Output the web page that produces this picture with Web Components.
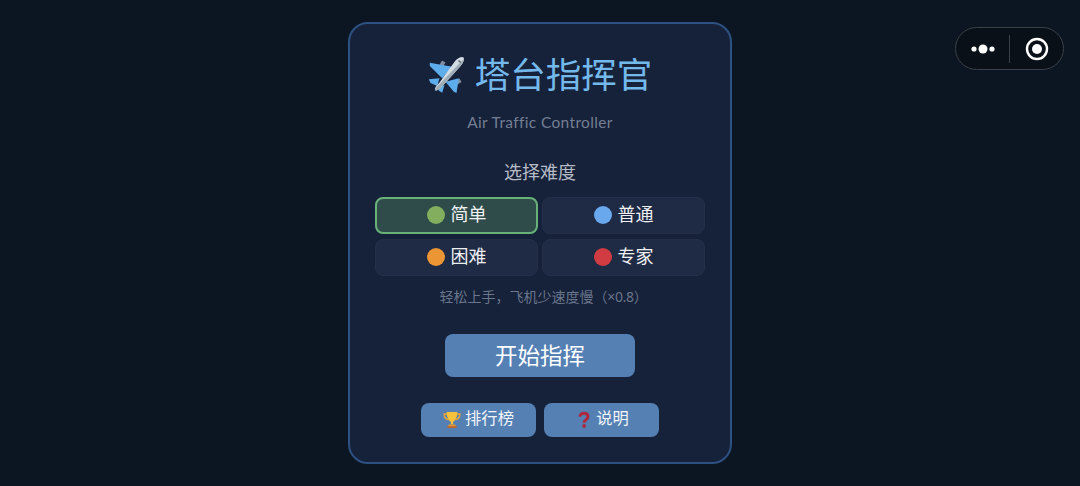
<!DOCTYPE html>
<html lang="zh"><head><meta charset="utf-8"><title>塔台指挥官</title>
<style>
html,body{margin:0;height:486px;overflow:hidden;background:#0c1622}
body{font-family:"Noto Sans","Noto Sans CJK SC",sans-serif}
</style></head><body>
<atc-screen>
  <atc-card>
    <atc-title></atc-title>
    <atc-difficulty></atc-difficulty>
    <atc-start>开始指挥</atc-start>
    <atc-actions></atc-actions>
  </atc-card>
  <atc-capsule></atc-capsule>
</atc-screen>
<script>
const def=(name,html,init)=>customElements.define(name,class extends HTMLElement{
  constructor(){super();this.attachShadow({mode:'open'}).innerHTML=html}
  connectedCallback(){init&&init(this)}
});
const FONT='"Noto Sans","Noto Sans CJK SC",sans-serif';
const PLANE=`<svg width="36" height="37" viewBox="-1.500 -1 36 37" style="overflow:visible" aria-hidden="true">
<path fill="#7f8fa0" d="M12.500 3.500l3.500 2-2.500 4-3.300-2zM30 21.500l2 3.500-4 2.500-2-3.300z"/>
<path fill="#5dadec" d="M.3 5.700 22.700 9.700 12.700 21.300.3 9zM29.300 21.300 27 36 24.300 34.700 16 24.700zM-.7 22.300 10 21.300 7.700 29 1 26zM15 28 12.700 35.700 9.300 33.700 9 31z"/>
<path fill="#d3dce3" d="M34 .6c1.400 1.400-.1 5.600-3.300 8.800L13 29c-2.100 2.100-5.900 5.600-7.300 4.200-1.400-1.400 1.900-5 4-7.100L25.600 3.900C28.800.7 32.600-.8 34 .6z"/>
<path fill="#9fadb8" d="M5.700 33.200c-1.100-1.100 2.400-4.200 4.400-6.200L30.800 5.600c1.400-1.400 2.900-2.800 3.200-4.300.8 1.700-.3 5.100-3.300 8.100L13 29c-2.100 2.100-5.900 5.600-7.300 4.200z"/>
<path fill="#55626d" d="M29.500 3.100l2.200 2-.9.9-2.300-2z"/></svg>`;
const TROPHY=`<svg width="18" height="18" viewBox="0 0 18 18" aria-hidden="true">
<path fill="none" stroke="#f4a52e" stroke-width="1.500" d="M4 3H1.200c0 3.500 1.300 5.300 4 5.500M14 3h2.800c0 3.500-1.300 5.300-4 5.500"/>
<path fill="#f6c23c" d="M3.700 1h10.600c0 5-1.600 8.600-4.200 9.800v2.400H7.900v-2.400C5.300 9.600 3.700 6 3.700 1z"/>
<path fill="#e59a2b" d="M5.800 13.400h6.400l.8 2H5z"/><path fill="#c1662d" d="M4.300 15.200h9.400V17H4.300z"/></svg>`;
const QUESTION=`<svg width="12" height="18" viewBox="1 0 12 18" style="margin-left:4px" aria-hidden="true">
<path fill="none" stroke="#b0283c" stroke-width="3" d="M3 5.800C3 3.500 4.700 2.300 7 2.300s4 1.300 4 3.300c0 3-3.900 3-3.900 6.200"/>
<circle cx="7.100" cy="15" r="1.900" fill="#b0283c"/></svg>`;

def('atc-screen',`<style>:host{display:flex;justify-content:center;position:relative;height:486px;padding-top:22px;box-sizing:border-box}</style><slot></slot>`);
def('atc-card',`<style>:host{display:flex;flex-direction:column;align-items:center;box-sizing:border-box;width:384px;height:442px;padding:25px 25px 0;background:#16213a;border:2px solid #2c5182;border-radius:20px;color:#fff;font-family:${FONT}}</style><slot></slot>`);
def('atc-title',`<style>
:host{display:flex;flex-direction:column;align-items:center}
h1{margin:0;display:flex;align-items:center;gap:11px;height:50px;font-size:35.500px;line-height:50px;font-weight:400;color:#74b9ec;letter-spacing:0}
p{margin:11px 0 0;height:24px;line-height:24px;font-size:15.500px;color:#747f93;font-family:"Lato","Noto Sans",sans-serif;letter-spacing:.35px}
</style><h1><span style="display:flex">${PLANE}</span><span>塔台指挥官</span></h1><p>Air Traffic Controller</p>`);
def('atc-difficulty',`<style>
:host{display:flex;flex-direction:column;align-items:center;margin-top:25px;width:330px}
h2{margin:0;font-size:18px;line-height:26px;font-weight:400;color:#b6bcc6}
.grid{display:grid;grid-template-columns:163px 163px;gap:5px 4px;margin-top:12px}
button{display:flex;align-items:center;justify-content:center;gap:6px;height:37px;box-sizing:border-box;border:1px solid #252f48;border-radius:8px;background:#1f2a44;color:#eef0f3;font:400 18px ${FONT};padding:0}
button span{display:block;line-height:20px;padding-bottom:4px}
button.on{background:#2f4c4b;border:2px solid #68b27a}
i{width:18px;height:18px;border-radius:50%;display:block;margin-top:-1px}
p{margin:9px 0 0;padding-left:7px;font-size:14px;line-height:24px;color:#6a768b}
p span{letter-spacing:-.3px}
</style><h2>选择难度</h2><div class="grid">
<button class="on"><i style="background:#82ae5e"></i><span>简单</span></button>
<button><i style="background:#69a8ec"></i><span>普通</span></button>
<button><i style="background:#eb9535"></i><span>困难</span></button>
<button><i style="background:#d13c42"></i><span>专家</span></button>
</div><p>轻松上手，飞机少速度慢<span>（×0.8）</span></p>`);
def('atc-start',`<style>:host{display:flex;align-items:center;justify-content:center;box-sizing:border-box;padding-bottom:2px;width:190px;height:43px;margin-top:25px;background:#5480b4;border-radius:8px;font-size:22.500px;color:#fff}</style><slot></slot>`);
def('atc-actions',`<style>
:host{display:flex;gap:8px;margin-top:26px}
div{display:flex;align-items:center;justify-content:center;gap:4px;width:115px;height:34px;background:#5480b4;border-radius:8px;font-size:16.300px;color:#f2f5f9}
div:first-child{width:114px}
div+div{gap:6px}
span{display:block;line-height:20px;padding-bottom:4px}
</style><div>${TROPHY}<span>排行榜</span></div><div>${QUESTION}<span>说明</span></div>`);
def('atc-capsule',`<style>
:host{position:absolute;top:27px;left:955px;width:109px;height:43px;box-sizing:border-box;border:1px solid #3a4149;border-radius:22px;background:#0a1017;display:flex;align-items:center}
.a{width:53px;height:100%;display:flex;align-items:center;justify-content:center}
.l{width:1px;height:28px;background:#3a4149}
.b{flex:1;display:flex;align-items:center;justify-content:center}
</style><div class="a"><svg width="26" height="10" viewBox="0 0 26 10"><circle cx="4" cy="5" r="2.600" fill="#fff"/><circle cx="13" cy="5" r="4.500" fill="#fff"/><circle cx="22" cy="5" r="2.600" fill="#fff"/></svg></div><div class="l"></div><div class="b"><svg width="24" height="24" viewBox="0 0 24 24"><circle cx="12" cy="12" r="10" fill="none" stroke="#fff" stroke-width="2.400"/><circle cx="12" cy="12" r="5" fill="#fff"/></svg></div>`);
</script></body></html>
